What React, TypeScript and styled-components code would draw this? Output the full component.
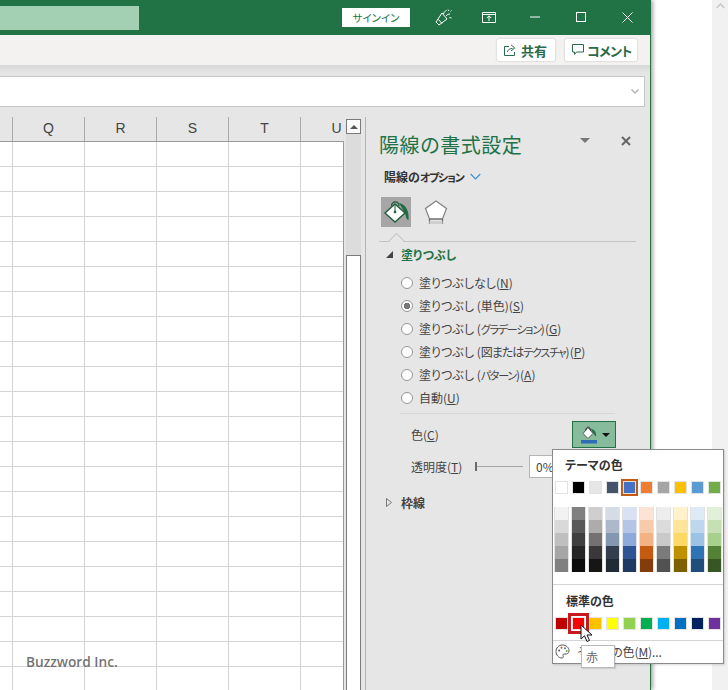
import type { ReactNode } from "react";
import styled, { createGlobalStyle } from "styled-components";

const GlobalStyle = createGlobalStyle`
  html, body {
    margin: 0;
    padding: 0;
    background: #fff;
  }
  body {
    font-family: "Noto Sans CJK JP", "Noto Sans", sans-serif;
    font-size: 12px;
    font-feature-settings: "palt";
    color: #444;
  }
`;

const Screen = styled.div`
  position: relative;
  width: 728px;
  height: 690px;
  overflow: hidden;
  display: flex;
  background: #fff;
`;

const ExcelWindow = styled.div`
  width: 650px;
  height: 690px;
  flex: none;
  display: flex;
  flex-direction: column;
  background: #e6e6e6;
  border-right: 1px solid #217346;
  box-shadow: 2px 0 4px rgba(0, 0, 0, 0.35);
`;

const TitleBar = styled.div`
  height: 35px;
  flex: none;
  display: flex;
  align-items: flex-start;
  background: #217346;
`;

const SearchBox = styled.div`
  width: 139px;
  height: 24px;
  margin-top: 6px;
  background: #a3d0b3;
`;

const SignIn = styled.div`
  width: 68px;
  height: 19px;
  margin: 8px 10px 0 auto;
  background: #fff;
  color: #217346;
  font-size: 10.5px;
  line-height: 19px;
  text-align: center;
`;

const TitleButton = styled.div`
  width: 46px;
  height: 34px;
  display: flex;
  align-items: center;
  justify-content: center;
`;

const Ribbon = styled.div`
  height: 30px;
  flex: none;
  display: flex;
  justify-content: flex-end;
  gap: 10px;
  padding: 4px 13px 0 0;
  box-sizing: border-box;
  background: #f3f2f1;
`;

const RibbonButton = styled.div<{ $width: number; $gap: number }>`
  width: ${(p) => p.$width}px;
  height: 22px;
  padding-left: 7px;
  box-sizing: border-box;
  display: flex;
  align-items: center;
  gap: ${(p) => p.$gap}px;
  background: #fff;
  border-radius: 2px;
  box-shadow: 0 0 2px rgba(0, 0, 0, 0.25);
  color: #2a6a4a;
  font-size: 13px;
  font-weight: 700;
`;

const RibbonKana = styled.span`
  letter-spacing: -0.6px;
`;

const RibbonShadow = styled.div`
  height: 11px;
  flex: none;
  background: linear-gradient(#d8d8d8, #e6e6e6 70%);
`;

const FormulaBar = styled.div`
  height: 31px;
  flex: none;
  margin-right: 5px;
  display: flex;
  align-items: center;
  justify-content: flex-end;
  padding-right: 5px;
  box-sizing: border-box;
  background: #fff;
  border: solid #c6c6c6;
  border-width: 1px 1px 1px 0;
`;

const Body = styled.div`
  flex: 1;
  min-height: 0;
  display: flex;
  padding-top: 10px;
`;

const SheetArea = styled.div`
  width: 344px;
  flex: none;
  display: flex;
  flex-direction: column;
`;

const ColumnHeaders = styled.div`
  height: 24px;
  flex: none;
  display: flex;
  padding-left: 12px;
  overflow: hidden;
`;

const ColumnHeader = styled.div`
  width: 72px;
  flex: none;
  box-sizing: border-box;
  border-left: 1px solid #ababab;
  text-align: center;
  font-family: "Liberation Sans", sans-serif;
  font-size: 14px;
  line-height: 23px;
  color: #444;
`;

const Sheet = styled.div`
  flex: 1;
  background-color: #fff;
  background-image: linear-gradient(to right, #d4d4d4 1px, transparent 1px),
    linear-gradient(to bottom, #d4d4d4 1px, transparent 1px);
  background-size: 72px 100%, 100% 25px;
  background-position: 12px 0, 0 24px;
  border: solid #9a9a9a;
  border-width: 1px 1px 0 0;
`;

const ScrollColumn = styled.div`
  width: 15px;
  flex: none;
  margin: 2px 4px 0 2px;
  display: flex;
  flex-direction: column;
  background: #dcdcdc;
`;

const ScrollUp = styled.div`
  height: 15px;
  flex: none;
  box-sizing: border-box;
  background: #fafafa;
  border: 1px solid #7a7a7a;
  display: flex;
  align-items: center;
  justify-content: center;
`;

const ScrollGap = styled.div`
  height: 121px;
  flex: none;
`;

const ScrollThumb = styled.div`
  flex: 1;
  background: #fff;
  border: solid #7a7a7a;
  border-width: 1px 1px 0;
`;

const Pane = styled.div`
  flex: 1;
  min-width: 0;
  box-sizing: border-box;
  border-left: 1px solid #b4b4b4;
  padding: 12px 14px 0 13px;
  display: flex;
  flex-direction: column;
`;

const PaneHead = styled.div`
  height: 30px;
  display: flex;
  align-items: center;
`;

const PaneTitle = styled.div`
  flex: 1;
  font-size: 20px;
  font-feature-settings: normal;
  letter-spacing: 0.45px;
  color: #217346;
  white-space: nowrap;
`;

const PaneMenu = styled.div`
  width: 0;
  height: 0;
  margin: 0 31px 7px 0;
  border: solid transparent;
  border-width: 5px 5px 0;
  border-top-color: #777;
`;

const PaneClose = styled.div`
  display: flex;
  margin: 0 5px 7px 0;
`;

const OptionsRow = styled.div`
  height: 22px;
  margin: 6px 0 0 5px;
  display: flex;
  align-items: center;
  gap: 6px;
  font-size: 12px;
  font-weight: 700;
  color: #333;
  white-space: nowrap;
`;

const IconTabs = styled.div`
  height: 30px;
  margin: 10px 0 0 2px;
  display: flex;
  gap: 10px;
`;

const IconTab = styled.div<{ $active?: boolean }>`
  width: 30px;
  height: 30px;
  display: flex;
  align-items: center;
  justify-content: center;
  background: ${(p) => (p.$active ? "#a6a6a6" : "transparent")};
`;

const PaneRule = styled.div`
  position: relative;
  height: 1px;
  margin-top: 14px;
  background: #c4c4c4;
  flex: none;
`;

const RuleNotch = styled.span`
  position: absolute;
  left: 12px;
  top: -6px;
  width: 10px;
  height: 10px;
  background: #e6e6e6;
  border: solid #c4c4c4;
  border-width: 1px 0 0 1px;
  transform: rotate(45deg);
`;

const Section = styled.div<{ $color: string; $gap: number }>`
  height: 20px;
  margin-top: ${(p) => p.$gap}px;
  display: flex;
  align-items: center;
  font-size: 12px;
  font-weight: 700;
  color: ${(p) => p.$color};
`;

const Twist = styled.span`
  width: 22px;
  flex: none;
  padding-left: 7px;
  box-sizing: border-box;
  display: flex;
`;

const RadioList = styled.div`
  margin: 7px 0 0 22px;
  display: flex;
  flex-direction: column;
`;

const RadioRow = styled.div`
  height: 23px;
  display: flex;
  align-items: center;
  gap: 6px;
  color: #444;
  white-space: nowrap;
`;

const RadioCircle = styled.span<{ $on?: boolean }>`
  width: 12px;
  height: 12px;
  flex: none;
  box-sizing: border-box;
  border-radius: 50%;
  border: 1px solid #979797;
  background: ${(p) =>
    p.$on ? "radial-gradient(circle, #777 0 3px, #fff 3.5px)" : "#fff"};
`;

// the reference's UI font has much narrower kana than Noto
const Kana = styled.span`
  font-size: 11px;
  letter-spacing: -1.2px;
`;

const Tight = styled.span`
  letter-spacing: -1px;
`;

const InnerRule = styled.div`
  height: 1px;
  margin: 4px 21px 0 21px;
  background: #d6d6d6;
`;

const FieldRow = styled.div<{ $height: number }>`
  height: ${(p) => p.$height}px;
  margin-left: 32px;
  display: flex;
  align-items: center;
  color: #444;
  white-space: nowrap;
`;

const FieldLabel = styled.span`
  width: 64px;
  flex: none;
`;

const ColorButton = styled.div`
  width: 44px;
  height: 27px;
  margin-left: 97px;
  box-sizing: border-box;
  flex: none;
  display: flex;
  align-items: center;
  justify-content: center;
  gap: 5px;
  background: #86bc9c;
  border: 1px solid #217346;
`;

const Caret = styled.span`
  width: 0;
  height: 0;
  border: solid transparent;
  border-width: 4px 4px 0;
  border-top-color: #111;
`;

const Slider = styled.div`
  position: relative;
  width: 48px;
  height: 1px;
  flex: none;
  background: #a6a6a6;
`;

const SliderKnob = styled.span`
  position: absolute;
  left: 0;
  top: -4px;
  width: 2px;
  height: 9px;
  background: #6a6a6a;
`;

const PercentInput = styled.div`
  width: 60px;
  height: 23px;
  margin-left: 6px;
  padding-left: 6px;
  box-sizing: border-box;
  flex: none;
  background: #fff;
  border: 1px solid #b4b4b4;
  line-height: 21px;
  color: #444;
`;

const ColorMenu = styled.div`
  position: absolute;
  left: 552px;
  top: 449px;
  width: 172px;
  height: 215px;
  box-sizing: border-box;
  background: #fff;
  border: 1px solid #8a8a8a;
  box-shadow: 1px 1px 2px rgba(0, 0, 0, 0.15);
`;

const MenuHeading = styled.div<{ $height: number; $left: number; $lift: number }>`
  height: ${(p) => p.$height}px;
  padding: 0 0 ${(p) => p.$lift}px ${(p) => p.$left}px;
  box-sizing: border-box;
  display: flex;
  align-items: center;
  font-size: 12px;
  font-weight: 700;
  color: #333;
`;

const SwatchRow = styled.div<{ $top?: number }>`
  display: flex;
  margin-top: ${(p) => p.$top ?? 0}px;
`;

const SwatchCell = styled.div`
  position: relative;
  width: 17px;
  flex: none;
  display: flex;
  flex-direction: column;
  align-items: center;
`;

const Swatch = styled.div<{ $color: string; $selected?: "orange" | "red" }>`
  position: relative;
  width: 13px;
  height: 13px;
  box-sizing: border-box;
  background: ${(p) => p.$color};
  border: 1px solid #e2e2e2;
  outline: ${(p) =>
    p.$selected === "orange"
      ? "2px solid #c55a11"
      : p.$selected === "red"
        ? "3px solid #c8191f"
        : "none"};
  outline-offset: ${(p) => (p.$selected === "red" ? "1px" : "0")};
`;

const Shade = styled.div<{ $color: string }>`
  width: 13px;
  height: 13px;
  background: ${(p) => p.$color};
`;

const ShadeStack = styled.div`
  border: solid #e2e2e2;
  border-width: 0 1px;
`;

const MenuRule = styled.div<{ $top: number }>`
  height: 1px;
  margin-top: ${(p) => p.$top}px;
  background: #d4d4d4;
`;

const MoreColors = styled.div`
  height: 21px;
  display: flex;
  align-items: center;
  padding-left: 2px;
  gap: 7px;
  color: #444;
  letter-spacing: -0.1px;
  white-space: nowrap;
`;

const ToolTip = styled.div`
  position: absolute;
  left: 581px;
  top: 645px;
  width: 34px;
  height: 23px;
  padding-left: 4px;
  box-sizing: border-box;
  background: #fff;
  border: 1px solid #b8b8b8;
  box-shadow: 1px 1px 1px rgba(0, 0, 0, 0.1);
  line-height: 21px;
  color: #666;
`;

const Pointer = styled.svg`
  position: absolute;
  left: 580px;
  top: 624px;
`;

const Watermark = styled.div`
  position: absolute;
  left: 26px;
  top: 652px;
  font-family: "Open Sans", sans-serif;
  font-size: 13.7px;
  font-weight: 600;
  line-height: 20px;
  color: rgba(90, 90, 90, 0.85);
`;

const RightStrip = styled.div`
  position: relative;
  width: 16px;
  flex: none;
  margin-left: auto;
  display: flex;
  justify-content: center;
  padding-top: 3px;
  box-sizing: border-box;
  background: #f1f1f1;
`;

const themeColors = ["#ffffff", "#000000", "#e7e6e6", "#44546a", "#4472c4", "#ed7d31", "#a5a5a5", "#ffc000", "#5b9bd5", "#70ad47"];

const shades = [
  ["#f2f2f2", "#d9d9d9", "#bfbfbf", "#a6a6a6", "#808080"],
  ["#808080", "#595959", "#404040", "#262626", "#0d0d0d"],
  ["#d0cece", "#aeabab", "#757171", "#3a3838", "#171616"],
  ["#d6dce4", "#adb9ca", "#8497b0", "#333f4f", "#222b35"],
  ["#d9e2f3", "#b4c6e7", "#8eaadb", "#2f5496", "#1f3864"],
  ["#fbe4d5", "#f7caac", "#f4b183", "#c55a11", "#833c0b"],
  ["#ededed", "#dbdbdb", "#c9c9c9", "#7b7b7b", "#525252"],
  ["#fff2cc", "#ffe599", "#ffd966", "#bf9000", "#7f6000"],
  ["#deeaf6", "#bdd7ee", "#9cc2e5", "#2e74b5", "#1e4e79"],
  ["#e2efd9", "#c5e0b3", "#a8d08d", "#538135", "#375623"],
];

const standardColors = ["#c00000", "#ff0000", "#ffc000", "#ffff00", "#92d050", "#00b050", "#00b0f0", "#0070c0", "#002060", "#7030a0"];

const radios: { label: ReactNode; key: string; on?: boolean }[] = [
  { label: "塗りつぶしなし", key: "N" },
  { label: "塗りつぶし (単色)", key: "S", on: true },
  { label: <>塗りつぶし (<Kana>グラデーション</Kana>)</>, key: "G" },
  { label: <>塗りつぶし (<Tight>図または</Tight><Kana>テクスチャ</Kana>)</>, key: "P" },
  { label: <>塗りつぶし (<Kana>パターン</Kana>)</>, key: "A" },
  { label: "自動", key: "U" },
];

function FillIcon() {
  return (
    <svg width="30" height="30" viewBox="0 0 30 30">
      <path d="M18 6 C25 7 28.5 15 27.5 23 C25 22.5 25 19 24 16 Z" fill="#1f6b45" />
      <path d="M14 7 L24 16 L14 25 L4 16 Z" fill="#fff" stroke="#1f5c3b" strokeWidth="1.4" />
      <path d="M10.5 9 C10.5 3.5 18 3.5 18 9" fill="none" stroke="#1f5c3b" strokeWidth="1.2" />
      <path d="M14 7 V14" stroke="#1f5c3b" />
      <circle cx="14" cy="15" r="1.3" fill="#1f5c3b" />
    </svg>
  );
}

function ShapeIcon() {
  return (
    <svg width="24" height="26" viewBox="0 0 24 26">
      <path d="M12 2 L22.5 9.5 L18.5 20 H5.5 L1.5 9.5 Z" fill="#fff" stroke="#808080" strokeWidth="1.2" />
      <path d="M5.5 20 H18.5 M5.5 25 V20 M18.5 25 V20" stroke="#666" strokeWidth="1.2" />
      <path d="M5.5 23.5 H18.5" stroke="#cfcfcf" strokeWidth="3" />
    </svg>
  );
}

function SmallFillIcon() {
  return (
    <svg width="18" height="18" viewBox="0 0 18 18">
      <path d="M9 1.5 L4 7.5 L9 12.5 L14 7.5 Z" fill="#fff" stroke="#555" strokeWidth="1" />
      <path d="M6.8 4.5 C7 0 11.5 0 11.5 4.5" fill="none" stroke="#333" strokeWidth="1" />
      <path d="M12 3 C16 3 17.5 7 17 10.5 C15.5 10 15.5 8 14 7.5 Z" fill="#2b6e48" />
      <rect x="2" y="14" width="16" height="3.5" fill="#2f6cb5" />
    </svg>
  );
}

function Palette() {
  return (
    <svg width="15" height="15" viewBox="0 0 15 15">
      <path d="M7.5 1 C3.5 1 1 4 1 7.5 C1 11 3.5 14 7 14 C8.5 14 8.5 12.5 8 11.5 C7.5 10.5 8.5 9.8 10 10 C12 10.3 14 9.5 14 6.8 C14 3.5 11 1 7.5 1 Z" fill="#fff" stroke="#555" strokeWidth="1" />
      <circle cx="4.2" cy="6.5" r="1" fill="#555" />
      <circle cx="6.5" cy="3.8" r="1" fill="#c55a11" />
      <circle cx="10" cy="4.2" r="1" fill="#4472c4" />
      <circle cx="11.6" cy="7" r="1" fill="#70ad47" />
    </svg>
  );
}

function App() {
  return (
    <Screen>
      <GlobalStyle />
      <ExcelWindow>
        <TitleBar>
          <SearchBox />
          <SignIn>サインイン</SignIn>
          <TitleButton>
            <svg width="17" height="17" viewBox="0 0 17 17" fill="none" stroke="#fff" strokeWidth="1">
              <path d="M4 16 L1 13 L7 4 L12 10 Z M3.5 10.5 L7 14.5" />
              <path d="M8.5 5 C9 3 10 2 11.5 1.5 M11 7 C12 5.5 13.5 5 15 5 M13 .5 L14 2 M15.5 2.5 L16.5 1.5 M14.5 8.5 L16.5 9" />
            </svg>
          </TitleButton>
          <TitleButton>
            <svg width="14" height="11" viewBox="0 0 14 11" fill="none" stroke="#fff" strokeWidth="1">
              <path d="M.5 .5 H13.5 V10.5 H.5 Z M.5 2.5 H13.5 M7 9 V4 M4.8 6 L7 3.8 L9.2 6" />
            </svg>
          </TitleButton>
          <TitleButton>
            <svg width="10" height="2" viewBox="0 0 10 2">
              <path d="M0 1 H10" stroke="#fff" />
            </svg>
          </TitleButton>
          <TitleButton>
            <svg width="10" height="10" viewBox="0 0 10 10">
              <rect x=".5" y=".5" width="9" height="9" fill="none" stroke="#fff" />
            </svg>
          </TitleButton>
          <TitleButton>
            <svg width="11" height="11" viewBox="0 0 11 11">
              <path d="M.5 .5 L10.5 10.5 M10.5 .5 L.5 10.5" stroke="#fff" />
            </svg>
          </TitleButton>
        </TitleBar>
        <Ribbon>
          <RibbonButton $width={58} $gap={5}>
            <svg width="12" height="12" viewBox="0 0 12 12" fill="none" stroke="#2a6a4a">
              <path d="M5 2.5 H.5 V11.5 H10.5 V8 M3.5 8 C4 5.5 5.5 4.5 8.5 4.5 M7 .8 L10.8 4 L7 7" />
            </svg>
            共有
          </RibbonButton>
          <RibbonButton $width={72} $gap={3}>
            <svg width="12" height="12" viewBox="0 0 12 12" fill="none" stroke="#2a6a4a">
              <path d="M.5 .5 H11.5 V8 H4.5 L2.5 10.5 V8 H.5 Z" />
            </svg>
            <RibbonKana>コメント</RibbonKana>
          </RibbonButton>
        </Ribbon>
        <RibbonShadow />
        <FormulaBar>
          <svg width="8" height="5" viewBox="0 0 8 5">
            <path d="M.5 .5 L4 4 L7.5 .5" fill="none" stroke="#b0b0b0" strokeWidth="1.4" />
          </svg>
        </FormulaBar>
        <Body>
          <SheetArea>
            <ColumnHeaders>
              {["Q", "R", "S", "T", "U"].map((c) => (
                <ColumnHeader key={c}>{c}</ColumnHeader>
              ))}
            </ColumnHeaders>
            <Sheet />
          </SheetArea>
          <ScrollColumn>
            <ScrollUp>
              <svg width="8" height="4" viewBox="0 0 8 4">
                <path d="M4 0 L8 4 H0 Z" fill="#555" />
              </svg>
            </ScrollUp>
            <ScrollGap />
            <ScrollThumb />
          </ScrollColumn>
          <Pane>
            <PaneHead>
              <PaneTitle>陽線の書式設定</PaneTitle>
              <PaneMenu />
              <PaneClose>
                <svg width="10" height="10" viewBox="0 0 10 10">
                  <path d="M1 1 L9 9 M9 1 L1 9" stroke="#666" strokeWidth="2" />
                </svg>
              </PaneClose>
            </PaneHead>
            <OptionsRow>
              <span>
                陽線の<Kana>オプション</Kana>
              </span>
              <svg width="11" height="7" viewBox="0 0 11 7">
                <path d="M.7 1 L5.5 5.8 L10.3 1" fill="none" stroke="#3f8fd0" strokeWidth="1.2" />
              </svg>
            </OptionsRow>
            <IconTabs>
              <IconTab $active>
                <FillIcon />
              </IconTab>
              <IconTab>
                <ShapeIcon />
              </IconTab>
            </IconTabs>
            <PaneRule>
              <RuleNotch />
            </PaneRule>
            <Section $color="#217346" $gap={2}>
              <Twist>
                <svg width="7" height="7" viewBox="0 0 7 7">
                  <path d="M7 0 V7 H0 Z" fill="#444" />
                </svg>
              </Twist>
              塗りつぶし
            </Section>
            <RadioList>
              {radios.map((r) => (
                <RadioRow key={r.key}>
                  <RadioCircle $on={r.on} />
                  <span>
                    {r.label}(<u>{r.key}</u>)
                  </span>
                </RadioRow>
              ))}
            </RadioList>
            <InnerRule />
            <FieldRow $height={41}>
              <FieldLabel>
                色(<u>C</u>)
              </FieldLabel>
              <ColorButton>
                <SmallFillIcon />
                <Caret />
              </ColorButton>
            </FieldRow>
            <FieldRow $height={22}>
              <FieldLabel>
                透明度(<u>T</u>)
              </FieldLabel>
              <Slider>
                <SliderKnob />
              </Slider>
              <PercentInput>0%</PercentInput>
            </FieldRow>
            <Section $color="#444" $gap={15}>
              <Twist>
                <svg width="6" height="9" viewBox="0 0 6 9">
                  <path d="M.5 .5 L5.5 4.5 L.5 8.5 Z" fill="none" stroke="#777" />
                </svg>
              </Twist>
              枠線
            </Section>
          </Pane>
        </Body>
      </ExcelWindow>
      <RightStrip>
        <svg width="9" height="6" viewBox="0 0 9 6">
          <path d="M.7 5 L4.5 1 L8.3 5" fill="none" stroke="#c8c8c8" strokeWidth="1.5" />
        </svg>
      </RightStrip>
      <Watermark>Buzzword Inc.</Watermark>
      <ColorMenu>
        <MenuHeading $height={31} $left={12} $lift={2}>
          テーマの色
        </MenuHeading>
        <SwatchRow>
          {themeColors.map((c, i) => (
            <SwatchCell key={c}>
              <Swatch $color={c} $selected={i === 4 ? "orange" : undefined} />
            </SwatchCell>
          ))}
        </SwatchRow>
        <SwatchRow $top={13}>
          {shades.map((col, i) => (
            <SwatchCell key={i}>
              <ShadeStack>
                {col.map((c, j) => (
                  <Shade key={j} $color={c} />
                ))}
              </ShadeStack>
            </SwatchCell>
          ))}
        </SwatchRow>
        <MenuRule $top={12} />
        <MenuHeading $height={32} $left={13} $lift={1}>
          標準の色
        </MenuHeading>
        <SwatchRow>
          {standardColors.map((c, i) => (
            <SwatchCell key={c}>
              <Swatch $color={c} $selected={i === 1 ? "red" : undefined} />
            </SwatchCell>
          ))}
        </SwatchRow>
        <MenuRule $top={10} />
        <MoreColors>
          <Palette />
          <span>
            その他の色(<u>M</u>)...
          </span>
        </MoreColors>
      </ColorMenu>
      <ToolTip>赤</ToolTip>
      <Pointer width="14" height="20" viewBox="0 0 14 20">
        <path d="M1 1 V15 L4.5 11.8 L7 17.5 L9.5 16.4 L7 11 H12 Z" fill="#fff" stroke="#111" strokeWidth="1" />
      </Pointer>
    </Screen>
  );
}

export default App;
